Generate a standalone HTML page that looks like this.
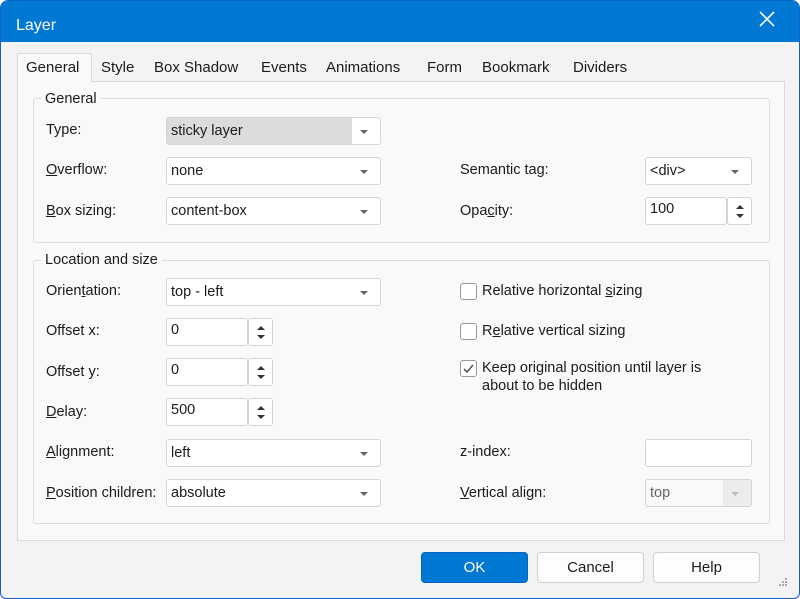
<!DOCTYPE html>
<html><head><style>
*{box-sizing:border-box}
body{margin:0;width:800px;height:599px;overflow:hidden;font-family:"Liberation Sans",sans-serif;font-size:14.5px;color:#1b1b1b;background:#fff}
.win{position:absolute;left:0;top:0;width:800px;height:599px;border:1px solid #1064c8;border-radius:8px 8px 6px 6px;background:#f3f3f3;overflow:hidden}
.title{position:absolute;left:0;top:0;width:800px;height:41px;background:#0078d4;color:#fff;font-size:16px}
.a{position:absolute;white-space:nowrap}
.panel{position:absolute;left:16px;top:80px;width:768px;height:460px;border:1px solid #d9d9d9;background:#f9f9f9}
.grp{position:absolute;border:1px solid #dcdcdc;border-radius:3px}
.lg{position:absolute;background:#f9f9f9;padding:0 4px}
.box{position:absolute;background:#fff;border:1px solid #d4d4d4;border-radius:3px;height:28px;padding:5px 4px;font-size:14.5px}
.arr{position:absolute;right:12px;top:12px;width:0;height:0;border-left:4px solid transparent;border-right:4px solid transparent;border-top:4px solid #666}
.sp{position:absolute;width:25px;height:28px;background:#fff;border:1px solid #d4d4d4;border-radius:3px}
.sp:before{content:"";position:absolute;left:8px;top:7px;border-left:4px solid transparent;border-right:4px solid transparent;border-bottom:4px solid #333}
.sp:after{content:"";position:absolute;left:8px;top:16px;border-left:4px solid transparent;border-right:4px solid transparent;border-top:4px solid #333}
.cb{position:absolute;width:17px;height:17px;border:1px solid #999;border-radius:3px;background:#fff}
.btn{position:absolute;top:551px;width:107px;height:31px;border:1px solid #d0d0d0;border-radius:4px;background:#fdfdfd;text-align:center;line-height:29px;font-size:15px}
u{text-decoration:underline}
</style></head><body>
<div class="win">
<div class="title"><span class="a" style="left:15px;top:16px">Layer</span>
<svg class="a" style="left:758px;top:10px" width="16" height="16"><path d="M1 1L15 15M15 1L1 15" stroke="#fff" stroke-width="1.6"/></svg></div>
<div class="a" style="left:16px;top:52px;width:75px;height:29px;background:#f9f9f9;border:1px solid #d9d9d9;border-bottom:none;z-index:2"></div>
<span class="a" style="left:25px;top:58px;z-index:3;font-size:15px">General</span>
<span class="a" style="left:100px;top:58px;font-size:15px">Style</span>
<span class="a" style="left:153px;top:58px;font-size:15px">Box Shadow</span>
<span class="a" style="left:260px;top:58px;font-size:15px">Events</span>
<span class="a" style="left:325px;top:58px;font-size:15px">Animations</span>
<span class="a" style="left:426px;top:58px;font-size:15px">Form</span>
<span class="a" style="left:481px;top:58px;font-size:15px">Bookmark</span>
<span class="a" style="left:572px;top:58px;font-size:15px">Dividers</span>
<div class="panel"></div>
<div class="grp" style="left:32px;top:97px;width:737px;height:145px"></div>
<span class="lg a" style="left:40px;top:90px">General</span>
<div class="grp" style="left:32px;top:259px;width:737px;height:264px"></div>
<span class="lg a" style="left:40px;top:251px">Location and size</span>

<span class="a" style="left:45px;top:121px">Type:</span>
<div class="box" style="left:165px;top:116px;width:215px;background:#dcdcdc">sticky layer<div style="position:absolute;right:0;top:0;width:28px;height:26px;background:#fff"></div><div class="arr"></div></div>
<span class="a" style="left:45px;top:161px"><u>O</u>verflow:</span>
<div class="box" style="left:165px;top:156px;width:215px">none<div class="arr"></div></div>
<span class="a" style="left:45px;top:202px"><u>B</u>ox sizing:</span>
<div class="box" style="left:165px;top:196px;width:215px">content-box<div class="arr"></div></div>
<span class="a" style="left:459px;top:161px">Semantic tag:</span>
<div class="box" style="left:644px;top:156px;width:107px">&lt;div&gt;<div class="arr"></div></div>
<span class="a" style="left:459px;top:202px">Opa<u>c</u>ity:</span>
<div class="box" style="left:644px;top:196px;width:82px;padding-top:3px">100</div><div class="sp" style="left:726px;top:196px"></div>

<span class="a" style="left:45px;top:282px">Orien<u>t</u>ation:</span>
<div class="box" style="left:165px;top:277px;width:215px">top - left<div class="arr"></div></div>
<span class="a" style="left:45px;top:322px">Offset x:</span>
<div class="box" style="left:165px;top:317px;width:82px;padding-top:3px">0</div><div class="sp" style="left:247px;top:317px"></div>
<span class="a" style="left:45px;top:363px">Offset y:</span>
<div class="box" style="left:165px;top:357px;width:82px;padding-top:3px">0</div><div class="sp" style="left:247px;top:357px"></div>
<span class="a" style="left:45px;top:403px"><u>D</u>elay:</span>
<div class="box" style="left:165px;top:397px;width:82px;padding-top:3px">500</div><div class="sp" style="left:247px;top:397px"></div>
<span class="a" style="left:45px;top:443px"><u>A</u>lignment:</span>
<div class="box" style="left:165px;top:438px;width:215px">left<div class="arr"></div></div>
<span class="a" style="left:45px;top:484px"><u>P</u>osition children:</span>
<div class="box" style="left:165px;top:478px;width:215px">absolute<div class="arr"></div></div>

<div class="cb" style="left:459px;top:282px"></div><span class="a" style="left:481px;top:282px">Relative horizontal <u>s</u>izing</span>
<div class="cb" style="left:459px;top:322px"></div><span class="a" style="left:481px;top:322px">R<u>e</u>lative vertical sizing</span>
<div class="cb" style="left:459px;top:359px"><svg width="15" height="15" style="position:absolute;left:0;top:0"><path d="M3 8L6 11L12 4" stroke="#555" stroke-width="1.6" fill="none"/></svg></div>
<span class="a" style="left:481px;top:359px">Keep original position until layer is</span>
<span class="a" style="left:481px;top:377px">about to be hidden</span>
<span class="a" style="left:459px;top:443px">z-index:</span>
<div class="box" style="left:644px;top:438px;width:107px"></div>
<span class="a" style="left:459px;top:484px"><u>V</u>ertical align:</span>
<div class="box" style="left:644px;top:478px;width:107px;background:#f9f9f9;color:#666">top<div style="position:absolute;right:0;top:0;width:28px;height:26px;background:#ececec"></div><div class="arr" style="border-top-color:#bbb"></div></div>

<div class="btn" style="left:420px;background:#0078d4;border-color:#0067c0;color:#fff">OK</div>
<div class="btn" style="left:536px">Cancel</div>
<div class="btn" style="left:652px">Help</div>
<svg class="a" style="left:776px;top:575px" width="12" height="12"><g fill="#aaa"><rect x="8" y="2" width="2" height="2"/><rect x="5" y="5" width="2" height="2"/><rect x="8" y="5" width="2" height="2"/><rect x="2" y="8" width="2" height="2"/><rect x="5" y="8" width="2" height="2"/><rect x="8" y="8" width="2" height="2"/></g></svg>
</div>
</body></html>
